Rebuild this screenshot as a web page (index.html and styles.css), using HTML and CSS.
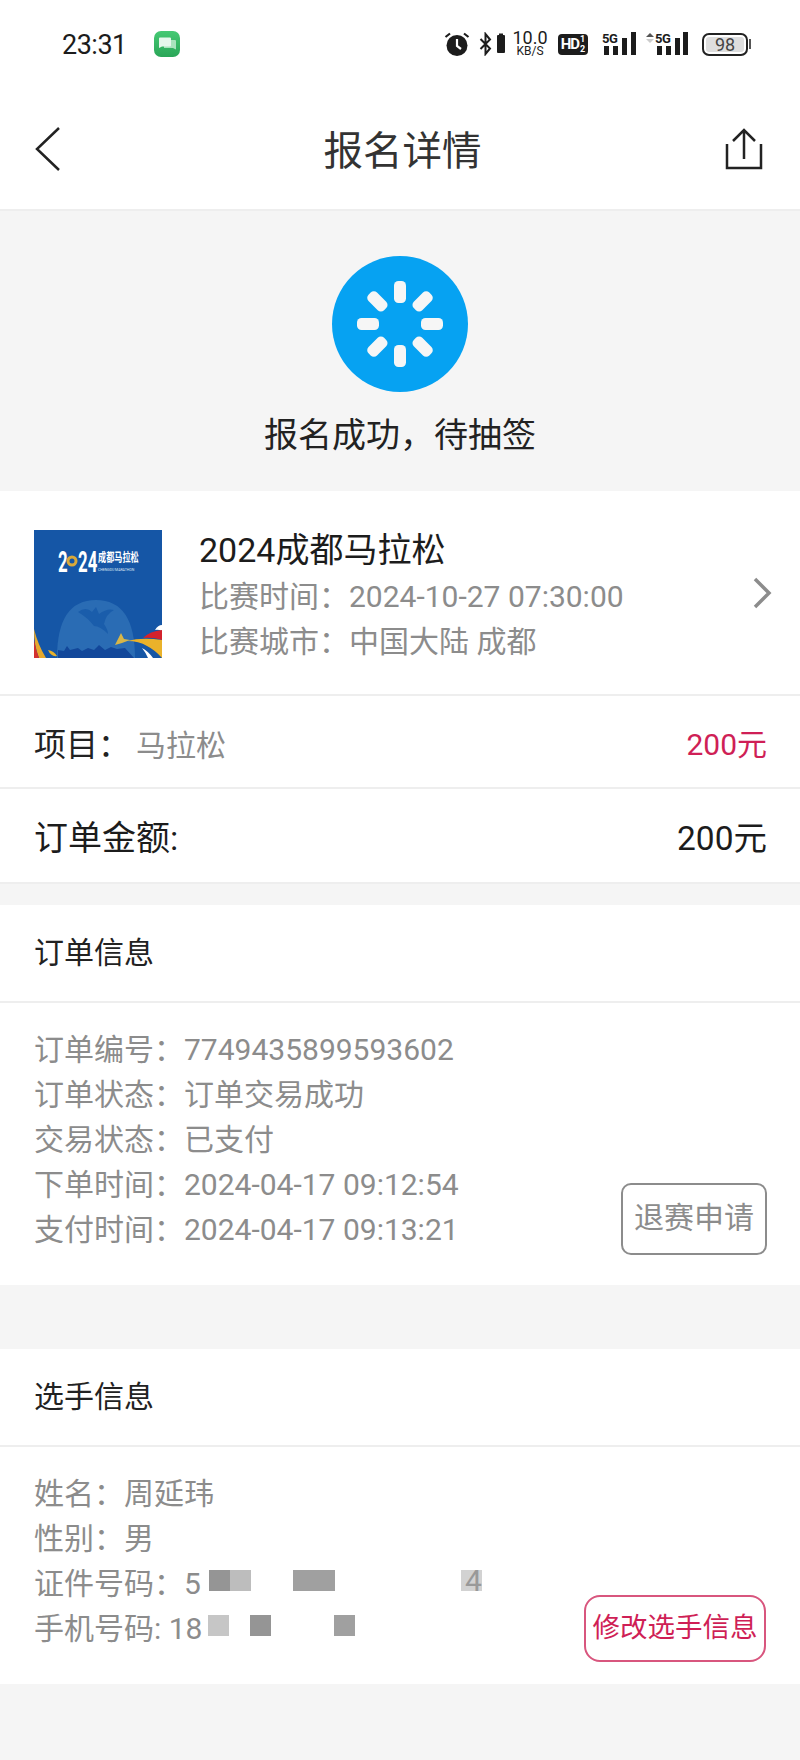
FILE: index.html
```html
<!DOCTYPE html>
<html lang="zh-CN">
<head>
    <meta charset="UTF-8">
    <meta name="viewport" content="width=device-width, initial-scale=1.0">
    <title>报名详情</title>
    <link rel="stylesheet" href="styles.css">
</head>
<body>
    <div class="status-bar">
        <div class="status-left">
            <span class="clock">23:31</span>
            <svg class="app-icon" width="26" height="26" viewBox="0 0 26 26">
                <defs>
                    <linearGradient id="appGreen" x1="0" y1="0" x2="0" y2="1">
                        <stop offset="0" stop-color="#45c973"/>
                        <stop offset="1" stop-color="#2aa658"/>
                    </linearGradient>
                </defs>
                <rect width="26" height="26" rx="7" fill="url(#appGreen)"/>
                <path d="M10 9h11a1 1 0 0 1 1 1v8.500l-3-1.500H10z" fill="#a9e3bd"/>
                <path d="M6 6.500h10a1 1 0 0 1 1 1v7a1 1 0 0 1-1 1H8l-3 1.500V7.500a1 1 0 0 1 1-1z" fill="#e6f7ec"/>
            </svg>
        </div>
        <div class="status-right">
            <svg class="alarm-icon" width="28" height="26" viewBox="0 0 28 26">
                <circle cx="14" cy="14.500" r="10.500" fill="#1c1c1c"/>
                <path d="M14 8v7l4 3" fill="none" stroke="#fff" stroke-width="2.200"/>
                <path d="M2.500 6 7 2.500M25.500 6 21 2.500" stroke="#1c1c1c" stroke-width="2.200" fill="none"/>
            </svg>
            <svg class="bt-icon" width="27" height="24" viewBox="0 0 27 24">
                <path d="M1.500 7 11 16.500 6.500 22V2L11 7.500 1.500 17" fill="none" stroke="#1c1c1c" stroke-width="2"/>
                <rect x="18" y="3" width="8" height="18" rx="1" fill="#1c1c1c"/>
                <rect x="20" y="1.500" width="4" height="2" fill="#1c1c1c"/>
            </svg>
            <div class="speed">
                <span class="speed-num">10.0</span>
                <span class="speed-unit">KB/S</span>
            </div>
            <div class="hd-badge">HD<span class="hd-frac">1<br>2</span></div>
            <svg class="signal" width="36" height="24" viewBox="0 0 36 24">
                <text x="0" y="11" class="signal-text">5G</text>
                <rect x="2" y="14" width="5" height="9"/>
                <rect x="11" y="14" width="5" height="9"/>
                <rect x="20" y="6" width="5" height="17"/>
                <rect x="29" y="0" width="5" height="23"/>
            </svg>
            <svg class="signal" width="46" height="24" viewBox="0 0 46 24">
                <path d="M1 5 5 1l4 4z" fill="#555"/>
                <path d="M1 7l4 4 4-4z" fill="#ccc"/>
                <text x="10" y="11" class="signal-text">5G</text>
                <rect x="12" y="14" width="5" height="9"/>
                <rect x="21" y="14" width="5" height="9"/>
                <rect x="30" y="6" width="5" height="17"/>
                <rect x="38" y="0" width="5" height="23"/>
            </svg>
            <div class="battery">
                <div class="battery-body">98</div>
                <div class="battery-nub"></div>
            </div>
        </div>
    </div>

    <div class="nav-bar">
        <svg width="30" height="44" viewBox="0 0 30 44">
            <path d="M25 1 3 22l22 21" fill="none" stroke="#222" stroke-width="2.500"/>
        </svg>
        <h1 class="nav-title">报名详情</h1>
        <svg width="40" height="44" viewBox="0 0 40 44">
            <path d="M3 17v24h34V17M20 32V3M9 14 20 3l11 11" fill="none" stroke="#222" stroke-width="2.500"/>
        </svg>
    </div>

    <div class="state-banner">
        <svg width="136" height="136" viewBox="-68 -68 136 136">
            <circle r="68" fill="#06a2f2"/>
            <g fill="#f6f6f6">
                <rect x="-6" y="-43" width="12" height="22" rx="4.500"/>
                <rect x="-6" y="-43" width="12" height="22" rx="4.500" transform="rotate(45)"/>
                <rect x="-6" y="-43" width="12" height="22" rx="4.500" transform="rotate(90)"/>
                <rect x="-6" y="-43" width="12" height="22" rx="4.500" transform="rotate(135)"/>
                <rect x="-6" y="-43" width="12" height="22" rx="4.500" transform="rotate(180)"/>
                <rect x="-6" y="-43" width="12" height="22" rx="4.500" transform="rotate(225)"/>
                <rect x="-6" y="-43" width="12" height="22" rx="4.500" transform="rotate(270)"/>
                <rect x="-6" y="-43" width="12" height="22" rx="4.500" transform="rotate(315)"/>
            </g>
        </svg>
        <div class="state-text">报名成功，待抽签</div>
    </div>

    <div class="race-card">
        <svg class="race-thumb" width="128" height="128" viewBox="0 0 128 128">
            <rect width="128" height="128" fill="#1556a6"/>
            <path d="M23 128q0-58 39-58t39 58z" fill="#2a6cb4"/>
            <path d="M44 82q8-6 14 0l4-5 3 7q8-6 15-4-8 4-10 14 4 6 4 10-8-8-14-8-6-8-16-14z" fill="#1a5dab"/>
            <path d="M24 128v-8l6 1 3-5 3 4 8-2 4 3 6-3 6 2 5-5 6 5 6-3 6 2 8-1 9 10z" fill="#12479a"/>
            <path d="M0 99q4 16 12 29H5Q0 116 0 99z" fill="#e7a92c"/>
            <path d="M0 110q2 10 5 18H0z" fill="#d3312f"/>
            <path d="M14 120q6 1 9 6-6 1-9-6z" fill="#e7b22c"/>
            <path d="M128 95q-4 0-7 5 3-1 7 1z" fill="#fff"/>
            <path d="M128 100q-12 1-19 8 10-1 19 2z" fill="#d3222c"/>
            <path d="M128 110q-20-3-35 1 12 0 20 5 8 4 15 12z" fill="#eab22a"/>
            <path d="M108 118q6 3 11 10h-5q-2-5-6-10z" fill="#fff"/>
            <path d="M87 103l3 6 6 1-8 3-7 2q3-6 6-12z" fill="#d7b648"/>
            <text transform="translate(24 42) scale(.56 1)" class="thumb-year">2</text>
            <circle cx="38" cy="31" r="4" fill="none" stroke="#d9a93a" stroke-width="3"/>
            <text transform="translate(44 42) scale(.56 1)" class="thumb-year">24</text>
            <text transform="translate(64 32) scale(.68 1)" class="thumb-name">成都马拉松</text>
            <text x="64" y="41" class="thumb-en">CHENGDU MARATHON</text>
        </svg>
        <div class="race-info">
            <div class="race-title">2024成都马拉松</div>
            <div class="race-line">比赛时间：2024-10-27 07:30:00</div>
            <div class="race-line">比赛城市：中国大陆 成都</div>
        </div>
        <svg class="race-arrow" width="20" height="32" viewBox="0 0 20 32">
            <path d="M3 2l14 14L3 30" fill="none" stroke="#8c8c8c" stroke-width="3.500"/>
        </svg>
    </div>

    <div class="price-row">
        <div><span class="price-label">项目：</span><span class="price-value">马拉松</span></div>
        <div class="price-red">200元</div>
    </div>
    <div class="price-row total-row">
        <div class="total-label">订单金额:</div>
        <div class="total-value">200元</div>
    </div>

    <div class="section order-section">
        <div class="section-head">订单信息</div>
        <div class="section-body">
            <div class="lines">
                <div class="line">订单编号：7749435899593602</div>
                <div class="line">订单状态：订单交易成功</div>
                <div class="line">交易状态：已支付</div>
                <div class="line">下单时间：2024-04-17 09:12:54</div>
                <div class="line">支付时间：2024-04-17 09:13:21</div>
            </div>
            <div class="btn btn-grey">退赛申请</div>
        </div>
    </div>

    <div class="section player-section">
        <div class="section-head">选手信息</div>
        <div class="section-body">
            <div class="lines">
                <div class="line">姓名：周延玮</div>
                <div class="line">性别：男</div>
                <div class="line">证件号码：5<span class="mosaic id-mosaic"><i class="m1"></i><i class="m2"></i><i></i><i></i><i class="m3"></i><i class="m3"></i><i></i><i></i><i></i><i></i><i></i><i></i><i class="m4">4</i></span></div>
                <div class="line">手机号码: 18<span class="mosaic phone-mosaic"><i class="m5"></i><i></i><i class="m1"></i><i></i><i></i><i></i><i class="m3"></i></span></div>
            </div>
            <div class="btn btn-red">修改选手信息</div>
        </div>
    </div>
</body>
</html>
```

FILE: styles.css
```css
body {
    margin: 0;
    width: 800px;
    height: 1760px;
    overflow: hidden;
    background-color: #f5f5f5;
    font-family: Roboto, "Noto Sans CJK SC", sans-serif;
    color: #222;
}

/* status bar */
.status-bar {
    height: 88px;
    background: #fff;
    display: flex;
    justify-content: space-between;
    align-items: center;
    padding: 0 49px 0 62px;
}
.status-left {
    display: flex;
    align-items: center;
    gap: 27px;
}
.clock {
    font-size: 27px;
    letter-spacing: -0.5px;
    color: #1c1c1c;
    margin-top: 1px;
}
.status-right {
    display: flex;
    align-items: center;
    gap: 6px;
    color: #1c1c1c;
}
.alarm-icon {
    margin-right: 2px;
}
.speed {
    display: flex;
    flex-direction: column;
    align-items: center;
    width: 36px;
}
.speed-num {
    font-size: 18px;
    line-height: 14px;
}
.speed-unit {
    font-size: 12px;
    line-height: 12px;
}
.hd-badge {
    width: 30px;
    height: 21px;
    margin: 0 8px 0 4px;
    background: #1c1c1c;
    border-radius: 4px;
    color: #fff;
    font-size: 15px;
    font-weight: 700;
    line-height: 21px;
    display: flex;
    justify-content: center;
    letter-spacing: -1px;
}
.hd-frac {
    font-size: 9px;
    line-height: 10px;
    margin-left: 1px;
    letter-spacing: 0;
}
.signal + .signal {
    margin-left: 1px;
}
.signal rect {
    fill: #1c1c1c;
}
.signal-text {
    font-size: 13px;
    font-weight: 700;
    fill: #1c1c1c;
    letter-spacing: -0.5px;
}
.battery {
    display: flex;
    align-items: center;
    margin-left: 5px;
}
.battery-body {
    width: 46px;
    height: 23px;
    box-sizing: border-box;
    border: 2px solid #222;
    border-radius: 7px;
    background: #dedede;
    box-shadow: inset 0 0 0 2px #fff;
    font-size: 18px;
    line-height: 19px;
    text-align: center;
    color: #444;
}
.battery-nub {
    width: 2px;
    height: 10px;
    background: #555;
    margin-left: 1px;
}

/* nav */
.nav-bar {
    height: 121px;
    background: #fff;
    display: flex;
    justify-content: space-between;
    align-items: center;
    padding: 0 36px 0 34px;
}
.nav-title {
    margin: 0 0 3px 17px;
    font-size: 39.500px;
    font-weight: 400;
    color: #333;
}

/* state */
.state-banner {
    height: 282px;
    box-sizing: border-box;
    border-top: 2px solid #eeeeee;
    padding-top: 45px;
    background: #f5f5f5;
    text-align: center;
}
.state-banner svg {
    display: block;
    margin: 0 auto;
}
.state-text {
    margin-top: 18px;
    font-size: 34px;
    line-height: 50px;
    color: #222;
}

/* race card */
.race-card {
    height: 203px;
    box-sizing: border-box;
    padding: 36px 34px 0;
    background: #fff;
    display: flex;
    align-items: flex-start;
}
.race-thumb {
    display: block;
    margin: 3px 37px 0 0;
    flex-shrink: 0;
}
.race-title {
    font-size: 34px;
    line-height: 47px;
    color: #1c1c1c;
}
.race-line {
    font-size: 30px;
    line-height: 45px;
    color: #8c8c8c;
}
.race-arrow {
    margin: 50px -6px 0 auto;
}
.thumb-year {
    font-size: 30px;
    font-weight: 700;
    fill: #fff;
}
.thumb-name {
    font-size: 12px;
    font-weight: 700;
    fill: #fff;
}
.thumb-en {
    font-size: 3.500px;
    fill: #dfe8f3;
}

/* price rows */
.price-row {
    height: 91px;
    background: #fff;
    border-top: 2px solid #eeeeee;
    display: flex;
    justify-content: space-between;
    align-items: center;
    padding: 0 33px 0 34px;
}
.total-row {
    height: 93px;
    border-bottom: 2px solid #eeeeee;
}
.price-label {
    font-size: 32px;
    color: #222;
}
.price-value {
    font-size: 30px;
    color: #8c8c8c;
    margin-left: 6px;
}
.price-red {
    font-size: 30px;
    color: #cf1f56;
}
.total-label {
    font-size: 34px;
    color: #1c1c1c;
}
.total-value {
    font-size: 33.500px;
    color: #1c1c1c;
}

/* info sections */
.section {
    background: #fff;
}
.order-section {
    margin-top: 21px;
}
.player-section {
    margin-top: 64px;
}
.section-head {
    height: 96px;
    border-bottom: 2px solid #eeeeee;
    padding-left: 34px;
    font-size: 30px;
    line-height: 96px;
    color: #222;
}
.section-body {
    display: flex;
    justify-content: space-between;
    align-items: flex-end;
    padding: 21px 33px 30px 34px;
}
.order-section .section-body {
    height: 231px;
}
.player-section .section-body {
    height: 194px;
    padding-bottom: 22px;
    padding-right: 34px;
}
.lines {
    align-self: flex-start;
}
.line {
    display: flex;
    align-items: center;
    height: 45px;
    font-size: 30px;
    color: #8c8c8c;
    white-space: pre;
}
.btn {
    box-sizing: border-box;
    border: 2px solid;
    text-align: center;
    background: #fff;
}
.btn-grey {
    width: 146px;
    height: 72px;
    border-color: #8c8c8c;
    border-radius: 10px;
    font-size: 30px;
    line-height: 66px;
    color: #8c8c8c;
}
.btn-red {
    width: 182px;
    height: 67px;
    border-color: #d8567e;
    border-radius: 16px;
    font-size: 27.500px;
    line-height: 61px;
    color: #cf1f56;
}

/* blurred id numbers */
.mosaic {
    display: flex;
    height: 21px;
}
.mosaic i {
    display: block;
    width: 21px;
    height: 21px;
    font-style: normal;
    font-size: 30px;
    line-height: 21px;
    text-align: right;
    color: #999;
}
.id-mosaic {
    margin-left: 8px;
}
.phone-mosaic {
    margin-left: 6px;
}
.m1 { background: #959595; }
.m2 { background: #bdbdbd; }
.m3 { background: #a0a0a0; }
.m4 { background: #d2d2d2; }
.m5 { background: #c6c6c6; }
```
